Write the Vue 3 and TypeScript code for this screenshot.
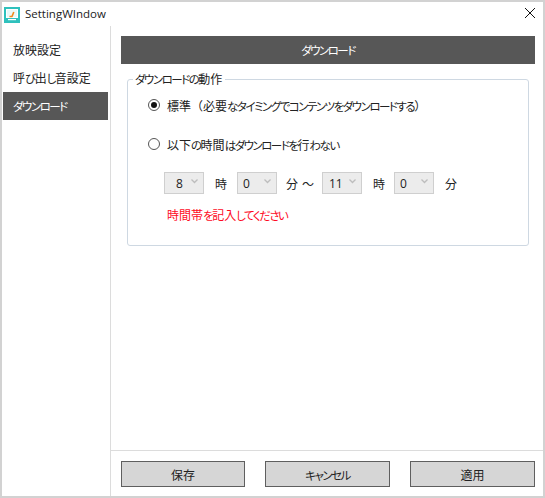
<script setup lang="ts">
interface Run { t: string; c: string }

const tabs = ['放映設定', '呼び出し音設定', 'ダウンロード']
const active = 2
const times = [
  { value: '8', unit: '時', cls: 'pad-wide', unitCls: 'gap-11' },
  { value: '0', unit: '分', cls: '', unitCls: 'gap-9' },
  { value: '11', unit: '時', cls: 'pad-mid', unitCls: 'gap-10' },
  { value: '0', unit: '分', cls: '', unitCls: '' },
]
const buttons = ['保存', 'キャンセル', '適用']

// The reference face has narrow kana beside full-width kanji, so kana runs are set tighter.
function runs(text: string): Run[] {
  const parts = text.match(/[\u3040-\u30ff]+|[（）]+|[^\u3040-\u30ff（）]+/g) ?? []
  return parts.map((t) => ({
    t,
    c: /[\u3040-\u30ff]/.test(t) ? 'kana' : /[（）]/.test(t) ? 'paren' : '',
  }))
}
</script>

<template>
  <div class="window">
    <header class="titlebar">
      <svg class="app-icon" width="16" height="16" viewBox="0 0 16 16">
        <rect width="16" height="16" fill="#2fc1bd" />
        <rect x="2.5" y="2.5" width="11" height="8" fill="none" stroke="#fff" stroke-width="1" />
        <rect x="3" y="3" width="10" height="7" fill="#e9f8f8" />
        <rect x="4" y="12" width="8" height="1.2" fill="#fff" />
        <path d="M5.5 9.5h3M8 9.5l1.8-4.5" stroke="#f08a1c" stroke-width="1.6" fill="none" />
      </svg>
      <span class="title">SettingWIndow</span>
      <svg class="close" width="10" height="10" viewBox="0 0 10 10">
        <path d="M0 0l10 10M10 0L0 10" stroke="#111" stroke-width="1" fill="none" />
      </svg>
    </header>
    <div class="body">
      <nav class="sidebar">
        <div v-for="(t, i) in tabs" :key="t" class="tab" :class="{ active: i === active }">
          <span v-for="(r, j) in runs(t)" :key="j" :class="r.c">{{ r.t }}</span>
        </div>
      </nav>
      <main class="content">
        <div class="upper">
          <h1 class="heading">
            <span v-for="(r, j) in runs('ダウンロード')" :key="j" :class="r.c">{{ r.t }}</span>
          </h1>
          <fieldset class="group">
            <legend>
              <span v-for="(r, j) in runs('ダウンロードの動作')" :key="j" :class="r.c">{{ r.t }}</span>
            </legend>
            <label class="radio-row first">
              <span class="radio checked"></span>
              <span>
                <span v-for="(r, j) in runs('標準（必要なタイミングでコンテンツをダウンロードする）')" :key="j" :class="r.c">{{ r.t }}</span>
              </span>
            </label>
            <label class="radio-row second">
              <span class="radio"></span>
              <span>
                <span v-for="(r, j) in runs('以下の時間はダウンロードを行わない')" :key="j" :class="r.c">{{ r.t }}</span>
              </span>
            </label>
            <div class="times">
              <div v-for="(t, i) in times" :key="i" class="time-item">
                <div class="select" :class="t.cls">
                  <span class="val">{{ t.value }}</span>
                  <svg class="chev" width="7" height="5" viewBox="0 0 7 5">
                    <path d="M0.5 0.5L3.5 3.5l3-3" stroke="#bdbdbd" stroke-width="1.3" fill="none" />
                  </svg>
                </div>
                <span class="unit" :class="t.unitCls">{{ t.unit }}</span>
                <span v-if="i === 1" class="tilde">～</span>
              </div>
            </div>
            <p class="error">
              <span v-for="(r, j) in runs('時間帯を記入してください')" :key="j" :class="r.c">{{ r.t }}</span>
            </p>
          </fieldset>
        </div>
        <footer class="footer">
          <button v-for="b in buttons" :key="b" type="button" class="btn">
            <span v-for="(r, j) in runs(b)" :key="j" :class="r.c">{{ r.t }}</span>
          </button>
        </footer>
      </main>
    </div>
  </div>
</template>

<style>
html, body { margin: 0; padding: 0; background: #fff; }
</style>

<style scoped>
.window {
  box-sizing: border-box;
  width: 545px;
  height: 498px;
  border: 2px solid #d2d2d2;
  background: #fff;
  display: flex;
  flex-direction: column;
  font-family: "Noto Sans CJK JP", "Noto Sans", sans-serif;
  font-size: 12px;
  color: #222;
  overflow: hidden;
}
.kana {
  font-size: 11.5px;
  font-feature-settings: "palt";
  letter-spacing: -1.5px;
}
.titlebar {
  height: 24px;
  flex: none;
  display: flex;
  align-items: center;
  padding: 0 8px 0 2px;
}
.app-icon { flex: none; margin-top: 2px; }
.title {
  margin-left: 5px;
  margin-bottom: 2px;
  font-family: "Open Sans", "Noto Sans", sans-serif;
  font-size: 11.5px;
}
.close { margin-left: auto; margin-bottom: 2px; }
.body { flex: 1; display: flex; min-height: 0; }
.sidebar {
  box-sizing: border-box;
  width: 109px;
  flex: none;
  border-right: 1px solid #dcdcdc;
  padding: 10px 0 0 1px;
  display: flex;
  flex-direction: column;
}
.tab {
  width: 105px;
  height: 28px;
  line-height: 27px;
  padding-left: 10px;
  box-sizing: border-box;
}
.tab.active { background: #575757; color: #fff; }
.content { flex: 1; display: flex; flex-direction: column; min-width: 0; }
.upper { flex: 1; padding: 10px 8px 0 10px; }
.heading {
  margin: 0;
  height: 28px;
  line-height: 28px;
  background: #575757;
  color: #fff;
  text-align: center;
  font-size: 12px;
  font-weight: 400;
}
.group {
  box-sizing: border-box;
  width: 402px;
  height: 175px;
  margin: 7px 0 0 6px;
  padding: 0 0 0 20px;
  border: 1px solid #ced8e2;
  border-radius: 3px;
  min-width: 0;
}
.group legend {
  margin-left: -15px;
  padding: 0 3px 0 2px;
  line-height: 16px;
}
.radio-row { display: flex; align-items: center; gap: 7px; height: 18px; }
.first { margin-top: 9px; }
.second { margin-top: 21px; }
.radio {
  box-sizing: border-box;
  width: 12px;
  height: 12px;
  border: 1px solid #555;
  border-radius: 50%;
  background: #fff;
  position: relative;
  flex: none;
}
.radio.checked::after {
  content: "";
  position: absolute;
  left: 2px;
  top: 2px;
  width: 6px;
  height: 6px;
  border-radius: 50%;
  background: #111;
}
.times { display: flex; margin: 19px 0 0 16px; height: 22px; }
.time-item { display: flex; align-items: center; }
.select {
  box-sizing: border-box;
  width: 40px;
  height: 22px;
  border: 1px solid #cfcfcf;
  background: #ececec;
  display: flex;
  align-items: center;
  position: relative;
  padding-left: 5px;
}
.select.pad-wide { padding-left: 11px; }
.select.pad-mid { padding-left: 6px; }
.chev { position: absolute; right: 5px; top: 6px; }
.val { font-family: "Open Sans", sans-serif; font-size: 12px; }
.unit { width: 11px; margin-left: 11px; margin-right: 11px; }
.unit.gap-9 { margin-left: 9px; margin-right: 5px; }
.unit.gap-10 { margin-right: 10px; }
.tilde { width: 11px; margin-right: 9px; }
.error { margin: 12px 0 0 19px; color: #fe0a1e; line-height: 18px; }
.footer {
  height: 46px;
  flex: none;
  box-sizing: border-box;
  border-top: 1px solid #dcdcdc;
  padding: 10px 8px 0 10px;
  display: grid;
  grid-template-columns: 124px 125px 125px;
  column-gap: 20px;
}
.btn {
  height: 26px;
  box-sizing: border-box;
  border: 1px solid #5f5f5f;
  background: #d6d6d6;
  color: #222;
  font: inherit;
  padding: 0;
}
</style>
